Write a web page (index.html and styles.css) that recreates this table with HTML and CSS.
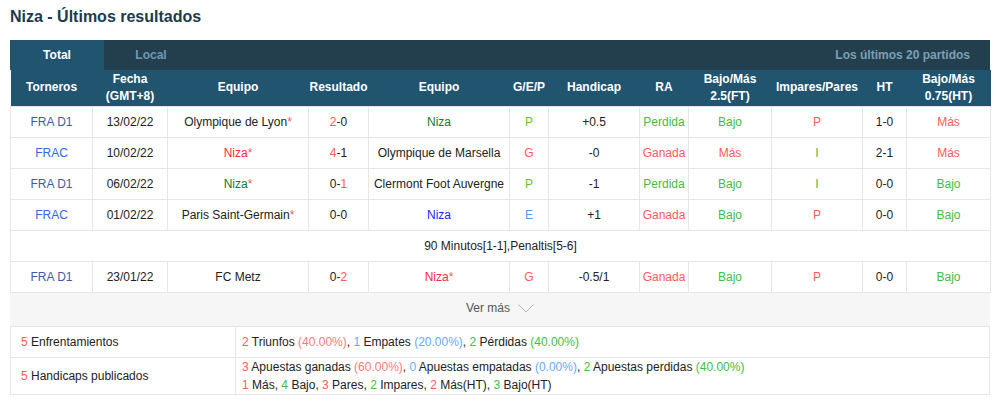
FILE: index.html
```html
<!DOCTYPE html>
<html lang="es">
<head>
<meta charset="utf-8">
<title>Niza - Últimos resultados</title>
<link rel="stylesheet" href="styles.css">
</head>
<body>
<div class="page">
  <h2 class="title">Niza - Últimos resultados</h2>
  <div class="tabs">
    <div class="tab active">Total</div>
    <div class="tab">Local</div>
    <div class="tabs-right">Los últimos 20 partidos</div>
  </div>
  <table class="results">
    <colgroup>
      <col class="c1"><col class="c2"><col class="c3"><col class="c4"><col class="c5"><col class="c6">
      <col class="c7"><col class="c8"><col class="c9"><col class="c10"><col class="c11"><col class="c12">
    </colgroup>
    <thead>
      <tr>
        <th>Torneros</th>
        <th>Fecha<br>(GMT+8)</th>
        <th>Equipo</th>
        <th>Resultado</th>
        <th>Equipo</th>
        <th>G/E/P</th>
        <th>Handicap</th>
        <th>RA</th>
        <th>Bajo/Más<br>2.5(FT)</th>
        <th>Impares/Pares</th>
        <th>HT</th>
        <th>Bajo/Más<br>0.75(HT)</th>
      </tr>
    </thead>
    <tbody>
      <tr>
        <td class="lg1">FRA D1</td>
        <td>13/02/22</td>
        <td>Olympique de Lyon<span class="red">*</span></td>
        <td><span class="red">2</span>-0</td>
        <td class="dgreen">Niza</td>
        <td class="lime">P</td>
        <td>+0.5</td>
        <td class="green">Perdida</td>
        <td class="green">Bajo</td>
        <td class="red">P</td>
        <td>1-0</td>
        <td class="red">Más</td>
      </tr>
      <tr>
        <td class="lg2">FRAC</td>
        <td>10/02/22</td>
        <td class="bred">Niza<span class="red">*</span></td>
        <td><span class="red">4</span>-1</td>
        <td>Olympique de Marsella</td>
        <td class="red">G</td>
        <td>-0</td>
        <td class="red">Ganada</td>
        <td class="red">Más</td>
        <td class="green">I</td>
        <td>2-1</td>
        <td class="red">Más</td>
      </tr>
      <tr>
        <td class="lg1">FRA D1</td>
        <td>06/02/22</td>
        <td class="dgreen">Niza<span class="red">*</span></td>
        <td>0-<span class="red">1</span></td>
        <td>Clermont Foot Auvergne</td>
        <td class="lime">P</td>
        <td>-1</td>
        <td class="green">Perdida</td>
        <td class="green">Bajo</td>
        <td class="green">I</td>
        <td>0-0</td>
        <td class="green">Bajo</td>
      </tr>
      <tr>
        <td class="lg2">FRAC</td>
        <td>01/02/22</td>
        <td>Paris Saint-Germain<span class="red">*</span></td>
        <td>0-0</td>
        <td class="dblue">Niza</td>
        <td class="lblue">E</td>
        <td>+1</td>
        <td class="red">Ganada</td>
        <td class="green">Bajo</td>
        <td class="red">P</td>
        <td>0-0</td>
        <td class="green">Bajo</td>
      </tr>
      <tr>
        <td class="note" colspan="12">90 Minutos[1-1],Penaltis[5-6]</td>
      </tr>
      <tr>
        <td class="lg1">FRA D1</td>
        <td>23/01/22</td>
        <td>FC Metz</td>
        <td>0-<span class="red">2</span></td>
        <td class="bred">Niza<span class="red">*</span></td>
        <td class="red">G</td>
        <td>-0.5/1</td>
        <td class="red">Ganada</td>
        <td class="green">Bajo</td>
        <td class="red">P</td>
        <td>0-0</td>
        <td class="green">Bajo</td>
      </tr>
    </tbody>
  </table>
  <div class="more">
    <span>Ver más</span>
    <svg class="chev" width="16" height="9" viewBox="0 0 16 9"><path d="M0.5 0.5 L8 8 L15.5 0.5" fill="none" stroke="#b5b5b5" stroke-width="1"/></svg>
  </div>
  <table class="summary">
    <tr>
      <td class="s-left"><span class="red">5</span> Enfrentamientos</td>
      <td class="s-right"><span class="red">2</span> Triunfos <span class="pred">(40.00%)</span>, <span class="pblue">1</span> Empates <span class="pblue">(20.00%)</span>, <span class="pgreen">2</span> Pérdidas <span class="pgreen">(40.00%)</span></td>
    </tr>
    <tr class="tall">
      <td class="s-left"><span class="red">5</span> Handicaps publicados</td>
      <td class="s-right"><span class="red">3</span> Apuestas ganadas <span class="pred">(60.00%)</span>, <span class="pblue">0</span> Apuestas empatadas <span class="pblue">(0.00%)</span>, <span class="pgreen">2</span> Apuestas perdidas <span class="pgreen">(40.00%)</span><br><span class="red">1</span> Más, <span class="pgreen">4</span> Bajo, <span class="red">3</span> Pares, <span class="pgreen">2</span> Impares, <span class="red">2</span> Más(HT), <span class="pgreen">3</span> Bajo(HT)</td>
    </tr>
  </table>
</div>
</body>
</html>
```

FILE: styles.css
```css
* { box-sizing: border-box; }
html, body { margin: 0; padding: 0; background: #fff; }
body {
  font-family: "Liberation Sans", Arial, sans-serif;
  font-size: 12px;
  color: #222;
}
.page {
  padding: 6px 7px 0 10px;
  width: 997px;
}
.title {
  margin: 0;
  height: 34px;
  font-size: 16px;
  font-weight: bold;
  color: #203a4c;
  line-height: 22px;
}
.tabs {
  display: flex;
  align-items: stretch;
  height: 30px;
  background: #233f4e;
  width: 980px;
}
.tab {
  width: 94px;
  display: flex;
  align-items: center;
  justify-content: center;
  font-weight: bold;
  font-size: 12px;
  color: #6f9ab4;
}
.tab.active {
  background: #21546f;
  color: #fff;
}
.tabs-right {
  margin-left: auto;
  display: flex;
  align-items: center;
  padding-right: 20px;
  font-weight: bold;
  color: #7aa0b5;
}
table { border-collapse: collapse; }
.results {
  width: 980px;
  table-layout: fixed;
}
.c1 { width: 82px; }
.c2 { width: 75px; }
.c3 { width: 141px; }
.c4 { width: 60px; }
.c5 { width: 141px; }
.c6 { width: 39px; }
.c7 { width: 91px; }
.c8 { width: 49px; }
.c9 { width: 83px; }
.c10 { width: 91px; }
.c11 { width: 44px; }
.c12 { width: 84px; }
.results th {
  background: #21546f;
  color: #fff;
  font-weight: bold;
  height: 36px;
  padding: 0;
  line-height: 17px;
  text-align: center;
  white-space: nowrap;
}
.results td {
  height: 31px;
  padding: 0;
  text-align: center;
  border: 1px solid #e6e6e6;
  white-space: nowrap;
}
.results td.note { color: #222; }
.lg1 { color: #3e5da6; }
.lg2 { color: #3366ee; }
.red { color: #ff5a5a; }
.bred { color: #ff2a3c; }
.green { color: #44bb44; }
.lime { color: #5fc61c; }
.dgreen { color: #127a34; }
.dblue { color: #1e1eff; }
.lblue { color: #4a9cff; }
.pred { color: #ff7a7a; }
.pblue { color: #66aaff; }
.pgreen { color: #44bb44; }
.more {
  width: 980px;
  height: 33px;
  background: #f6f6f6;
  display: flex;
  align-items: center;
  justify-content: center;
  gap: 8px;
  color: #555;
  padding-bottom: 2px;
}
.chev { display: block; margin-top: 1px; }
.summary {
  width: 980px;
  table-layout: fixed;
}
.summary td {
  border: 1px solid #e6e6e6;
  height: 31px;
  padding: 0;
  vertical-align: middle;
}
.summary tr.tall td { height: 37px; line-height: 18px; }
.s-left { width: 225px; padding-left: 10px !important; }
.s-right { padding-left: 6px !important; }
```
